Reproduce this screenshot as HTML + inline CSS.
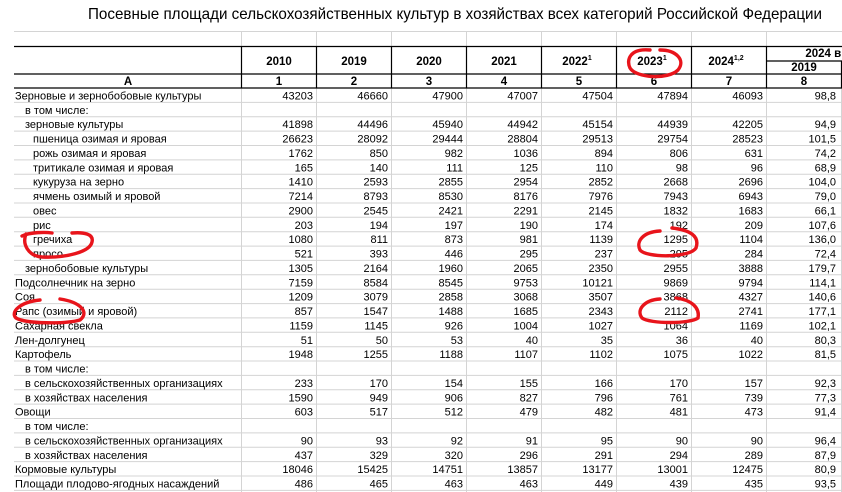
<!DOCTYPE html>
<html><head><meta charset="utf-8"><style>
html,body{margin:0;padding:0;background:#fff;width:842px;height:492px;overflow:hidden}
svg{display:block}
text{font-family:"Liberation Sans",Arial,sans-serif;font-size:11px;fill:#000}
.n text{text-anchor:end}
.h{font-weight:bold;text-anchor:middle;font-size:11.5px}
</style></head><body>
<svg width="842" height="492" viewBox="0 0 842 492" xmlns="http://www.w3.org/2000/svg">
<text x="455" y="19" text-anchor="middle" style="font-size:16px" textLength="734" lengthAdjust="spacingAndGlyphs">Посевные площади сельскохозяйственных культур в хозяйствах всех категорий Российской Федерации</text>
<g stroke="#d4d4d4" stroke-width="1">
<line x1="14" y1="31.5" x2="842" y2="31.5"/>
<path d="M241.5 31V46M316.5 31V46M391.5 31V46M466.5 31V46M541.5 31V46M616.5 31V46M691.5 31V46M766.5 31V46"/>
<path d="M241.5 88V492M316.5 88V492M391.5 88V492M466.5 88V492M541.5 88V492M616.5 88V492M691.5 88V492M766.5 88V492M841.5 88V492"/>
<path d="M14 102.4H842M14 116.7H842M14 131.1H842M14 145.5H842M14 159.9H842M14 174.2H842M14 188.6H842M14 203H842M14 217.3H842M14 231.7H842M14 246.1H842M14 260.4H842M14 274.8H842M14 289.2H842M14 303.6H842M14 317.9H842M14 332.3H842M14 346.7H842M14 361H842M14 375.4H842M14 389.8H842M14 404.1H842M14 418.5H842M14 432.9H842M14 447.3H842M14 461.6H842M14 476H842M14 490.4H842"/>
</g>
<g stroke="#000" stroke-width="1.2">
<path d="M14 46.5H842M14 74H842M14 88H842M766 61H842"/>
<path d="M241.5 46V88M316.5 46V88M391.5 46V88M466.5 46V88M541.5 46V88M616.5 46V88M691.5 46V88M766.5 46V88M841.5 61V88"/>
</g>
<text class="h" x="279" y="65">2010</text>
<text class="h" x="354" y="65">2019</text>
<text class="h" x="429" y="65">2020</text>
<text class="h" x="504" y="65">2021</text>
<text class="h" x="577" y="65">2022<tspan dy="-5" style="font-size:7px">1</tspan></text>
<text class="h" x="652" y="65">2023<tspan dy="-5" style="font-size:7px">1</tspan></text>
<text class="h" x="726" y="65">2024<tspan dy="-5" style="font-size:7px">1,2</tspan></text>
<text class="h" x="830" y="57">2024 в %</text>
<text class="h" x="804" y="71">2019</text>
<g class="h"><text class="h" x="128" y="85">A</text><text class="h" x="279" y="85">1</text><text class="h" x="354" y="85">2</text><text class="h" x="429" y="85">3</text><text class="h" x="504" y="85">4</text><text class="h" x="579" y="85">5</text><text class="h" x="654" y="85">6</text><text class="h" x="729" y="85">7</text><text class="h" x="804" y="85">8</text></g>

<g font-size="11">
<text x="15" y="99.5">Зерновые и зернобобовые культуры</text>
<text x="25" y="113.9">в том числе:</text>
<text x="25" y="128.2">зерновые культуры</text>
<text x="33" y="142.6">пшеница озимая и яровая</text>
<text x="33" y="157">рожь озимая и яровая</text>
<text x="33" y="171.4">тритикале озимая и яровая</text>
<text x="33" y="185.7">кукуруза на зерно</text>
<text x="33" y="200.1">ячмень озимый и яровой</text>
<text x="33" y="214.5">овес</text>
<text x="33" y="228.8">рис</text>
<text x="33" y="243.2">гречиха</text>
<text x="33" y="257.6">просо</text>
<text x="25" y="271.9">зернобобовые культуры</text>
<text x="15" y="286.3">Подсолнечник на зерно</text>
<text x="15" y="300.7">Соя</text>
<text x="15" y="315.1">Рапс (озимый и яровой)</text>
<text x="15" y="329.4">Сахарная свекла</text>
<text x="15" y="343.8">Лен-долгунец</text>
<text x="15" y="358.2">Картофель</text>
<text x="25" y="372.5">в том числе:</text>
<text x="25" y="386.9">в сельскохозяйственных организациях</text>
<text x="25" y="401.3">в хозяйствах населения</text>
<text x="15" y="415.6">Овощи</text>
<text x="25" y="430">в том числе:</text>
<text x="25" y="444.4">в сельскохозяйственных организациях</text>
<text x="25" y="458.8">в хозяйствах населения</text>
<text x="15" y="473.1">Кормовые культуры</text>
<text x="15" y="487.5">Площади плодово-ягодных насаждений</text>
</g>

<g class="n">
<g transform="translate(0,99.5)"><text x="313">43203</text><text x="388">46660</text><text x="463">47900</text><text x="538">47007</text><text x="613">47504</text><text x="688">47894</text><text x="763">46093</text><text x="836">98,8</text></g>
<g transform="translate(0,128.2)"><text x="313">41898</text><text x="388">44496</text><text x="463">45940</text><text x="538">44942</text><text x="613">45154</text><text x="688">44939</text><text x="763">42205</text><text x="836">94,9</text></g>
<g transform="translate(0,142.6)"><text x="313">26623</text><text x="388">28092</text><text x="463">29444</text><text x="538">28804</text><text x="613">29513</text><text x="688">29754</text><text x="763">28523</text><text x="836">101,5</text></g>
<g transform="translate(0,157)"><text x="313">1762</text><text x="388">850</text><text x="463">982</text><text x="538">1036</text><text x="613">894</text><text x="688">806</text><text x="763">631</text><text x="836">74,2</text></g>
<g transform="translate(0,171.4)"><text x="313">165</text><text x="388">140</text><text x="463">111</text><text x="538">125</text><text x="613">110</text><text x="688">98</text><text x="763">96</text><text x="836">68,9</text></g>
<g transform="translate(0,185.7)"><text x="313">1410</text><text x="388">2593</text><text x="463">2855</text><text x="538">2954</text><text x="613">2852</text><text x="688">2668</text><text x="763">2696</text><text x="836">104,0</text></g>
<g transform="translate(0,200.1)"><text x="313">7214</text><text x="388">8793</text><text x="463">8530</text><text x="538">8176</text><text x="613">7976</text><text x="688">7943</text><text x="763">6943</text><text x="836">79,0</text></g>
<g transform="translate(0,214.5)"><text x="313">2900</text><text x="388">2545</text><text x="463">2421</text><text x="538">2291</text><text x="613">2145</text><text x="688">1832</text><text x="763">1683</text><text x="836">66,1</text></g>
<g transform="translate(0,228.8)"><text x="313">203</text><text x="388">194</text><text x="463">197</text><text x="538">190</text><text x="613">174</text><text x="688">192</text><text x="763">209</text><text x="836">107,6</text></g>
<g transform="translate(0,243.2)"><text x="313">1080</text><text x="388">811</text><text x="463">873</text><text x="538">981</text><text x="613">1139</text><text x="688">1295</text><text x="763">1104</text><text x="836">136,0</text></g>
<g transform="translate(0,257.6)"><text x="313">521</text><text x="388">393</text><text x="463">446</text><text x="538">295</text><text x="613">237</text><text x="688">295</text><text x="763">284</text><text x="836">72,4</text></g>
<g transform="translate(0,271.9)"><text x="313">1305</text><text x="388">2164</text><text x="463">1960</text><text x="538">2065</text><text x="613">2350</text><text x="688">2955</text><text x="763">3888</text><text x="836">179,7</text></g>
<g transform="translate(0,286.3)"><text x="313">7159</text><text x="388">8584</text><text x="463">8545</text><text x="538">9753</text><text x="613">10121</text><text x="688">9869</text><text x="763">9794</text><text x="836">114,1</text></g>
<g transform="translate(0,300.7)"><text x="313">1209</text><text x="388">3079</text><text x="463">2858</text><text x="538">3068</text><text x="613">3507</text><text x="688">3868</text><text x="763">4327</text><text x="836">140,6</text></g>
<g transform="translate(0,315.1)"><text x="313">857</text><text x="388">1547</text><text x="463">1488</text><text x="538">1685</text><text x="613">2343</text><text x="688">2112</text><text x="763">2741</text><text x="836">177,1</text></g>
<g transform="translate(0,329.4)"><text x="313">1159</text><text x="388">1145</text><text x="463">926</text><text x="538">1004</text><text x="613">1027</text><text x="688">1064</text><text x="763">1169</text><text x="836">102,1</text></g>
<g transform="translate(0,343.8)"><text x="313">51</text><text x="388">50</text><text x="463">53</text><text x="538">40</text><text x="613">35</text><text x="688">36</text><text x="763">40</text><text x="836">80,3</text></g>
<g transform="translate(0,358.2)"><text x="313">1948</text><text x="388">1255</text><text x="463">1188</text><text x="538">1107</text><text x="613">1102</text><text x="688">1075</text><text x="763">1022</text><text x="836">81,5</text></g>
<g transform="translate(0,386.9)"><text x="313">233</text><text x="388">170</text><text x="463">154</text><text x="538">155</text><text x="613">166</text><text x="688">170</text><text x="763">157</text><text x="836">92,3</text></g>
<g transform="translate(0,401.3)"><text x="313">1590</text><text x="388">949</text><text x="463">906</text><text x="538">827</text><text x="613">796</text><text x="688">761</text><text x="763">739</text><text x="836">77,3</text></g>
<g transform="translate(0,415.6)"><text x="313">603</text><text x="388">517</text><text x="463">512</text><text x="538">479</text><text x="613">482</text><text x="688">481</text><text x="763">473</text><text x="836">91,4</text></g>
<g transform="translate(0,444.4)"><text x="313">90</text><text x="388">93</text><text x="463">92</text><text x="538">91</text><text x="613">95</text><text x="688">90</text><text x="763">90</text><text x="836">96,4</text></g>
<g transform="translate(0,458.8)"><text x="313">437</text><text x="388">329</text><text x="463">320</text><text x="538">296</text><text x="613">291</text><text x="688">294</text><text x="763">289</text><text x="836">87,9</text></g>
<g transform="translate(0,473.1)"><text x="313">18046</text><text x="388">15425</text><text x="463">14751</text><text x="538">13857</text><text x="613">13177</text><text x="688">13001</text><text x="763">12475</text><text x="836">80,9</text></g>
<g transform="translate(0,487.5)"><text x="313">486</text><text x="388">465</text><text x="463">463</text><text x="538">463</text><text x="613">449</text><text x="688">439</text><text x="763">435</text><text x="836">93,5</text></g>
</g>

<g fill="none" stroke="#e8141b" stroke-width="3.4" stroke-linecap="round">
<path d="M650 50 C630 48 626 60 630 68 C636 78 668 80 678 70 C686 60 676 50 660 50"/>
<path d="M26 234 C22 244 28 256 42 257 C66 258 90 252 92 242 C94 234 84 232 72 233 M22 236 C30 232 46 232 52 233"/>
<path d="M660 231 C642 232 636 242 640 250 C646 258 690 258 696 248 C700 236 690 230 672 228"/>
<path d="M40 300 C20 302 10 312 16 318 C26 324 66 324 80 320 C90 312 80 302 60 299"/>
<path d="M660 299 C644 300 636 310 642 318 C650 324 690 324 698 318 C700 308 692 300 676 298"/>
</g>
</svg>
</body></html>
